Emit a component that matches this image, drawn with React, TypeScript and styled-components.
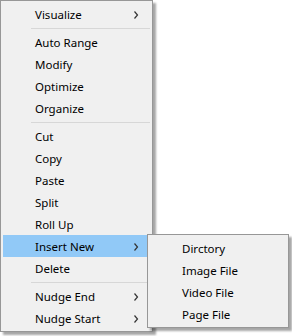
import styled, { createGlobalStyle } from 'styled-components'

const GlobalStyle = createGlobalStyle`
  body {
    margin: 0;
    background: #ffffff;
    font-family: 'Noto Sans', 'Liberation Sans', sans-serif;
  }
`

const Page = styled.div`
  width: 292px;
  height: 336px;
  position: relative;
`

const Menu = styled.div<{ $width: number }>`
  box-sizing: border-box;
  width: ${(props) => props.$width}px;
  background: #f0f0f0;
  border: 1px solid #979797;
  padding: 2px;
  box-shadow: 3px 3px 2px rgba(0, 0, 0, 0.35);
  display: flex;
  flex-direction: column;
`

const MainMenu = styled(Menu)`
  margin: 0;
`

const SubMenu = styled(Menu)`
  position: absolute;
  top: -1px;
  left: 144px;
  z-index: 2;
`

const Item = styled.div<{ $active?: boolean }>`
  position: relative;
  box-sizing: border-box;
  height: 22px;
  display: flex;
  align-items: center;
  padding: 2px 10px 0 32px;
  background: ${(props) => (props.$active ? '#91c9f7' : 'transparent')};
  font-size: 11.5px;
  color: #000000;
  white-space: nowrap;
`

const Label = styled.span`
  flex: 1;
  line-height: 20px;
`

const Arrow = styled.svg`
  width: 5px;
  height: 8px;
  margin-right: 1px;
`

const Separator = styled.div`
  height: 6px;
  display: flex;
  align-items: center;
  padding-left: 28px;

  &::after {
    content: '';
    flex: 1;
    height: 1px;
    background: #d7d7d7;
  }
`

const Chevron = () => (
  <Arrow viewBox="0 0 5 8">
    <polyline points="0.5,0.5 3.5,4 0.5,7.5" fill="none" stroke="#333333" strokeWidth="1.2" />
  </Arrow>
)

type Entry = { label: string, sub?: boolean } | 'sep'

const entries: Entry[] = [
  { label: 'Visualize', sub: true },
  'sep',
  { label: 'Auto Range' },
  { label: 'Modify' },
  { label: 'Optimize' },
  { label: 'Organize' },
  'sep',
  { label: 'Cut' },
  { label: 'Copy' },
  { label: 'Paste' },
  { label: 'Split' },
  { label: 'Roll Up' },
  { label: 'Insert New', sub: true },
  { label: 'Delete' },
  'sep',
  { label: 'Nudge End', sub: true },
  { label: 'Nudge Start', sub: true },
]

const insertItems = ['Dirctory', 'Image File', 'Video File', 'Page File']

export default function App() {
  return (
    <Page>
      <GlobalStyle />
      <MainMenu $width={153}>
        {entries.map((entry, index) => {
          if (entry === 'sep') return <Separator key={`sep-${index}`} />
          const open = entry.label === 'Insert New'
          return (
            <Item key={entry.label} $active={open}>
              <Label>{entry.label}</Label>
              {entry.sub && <Chevron />}
              {open && (
                <SubMenu $width={142}>
                  {insertItems.map((label) => (
                    <Item key={label}>
                      <Label>{label}</Label>
                    </Item>
                  ))}
                </SubMenu>
              )}
            </Item>
          )
        })}
      </MainMenu>
    </Page>
  )
}
